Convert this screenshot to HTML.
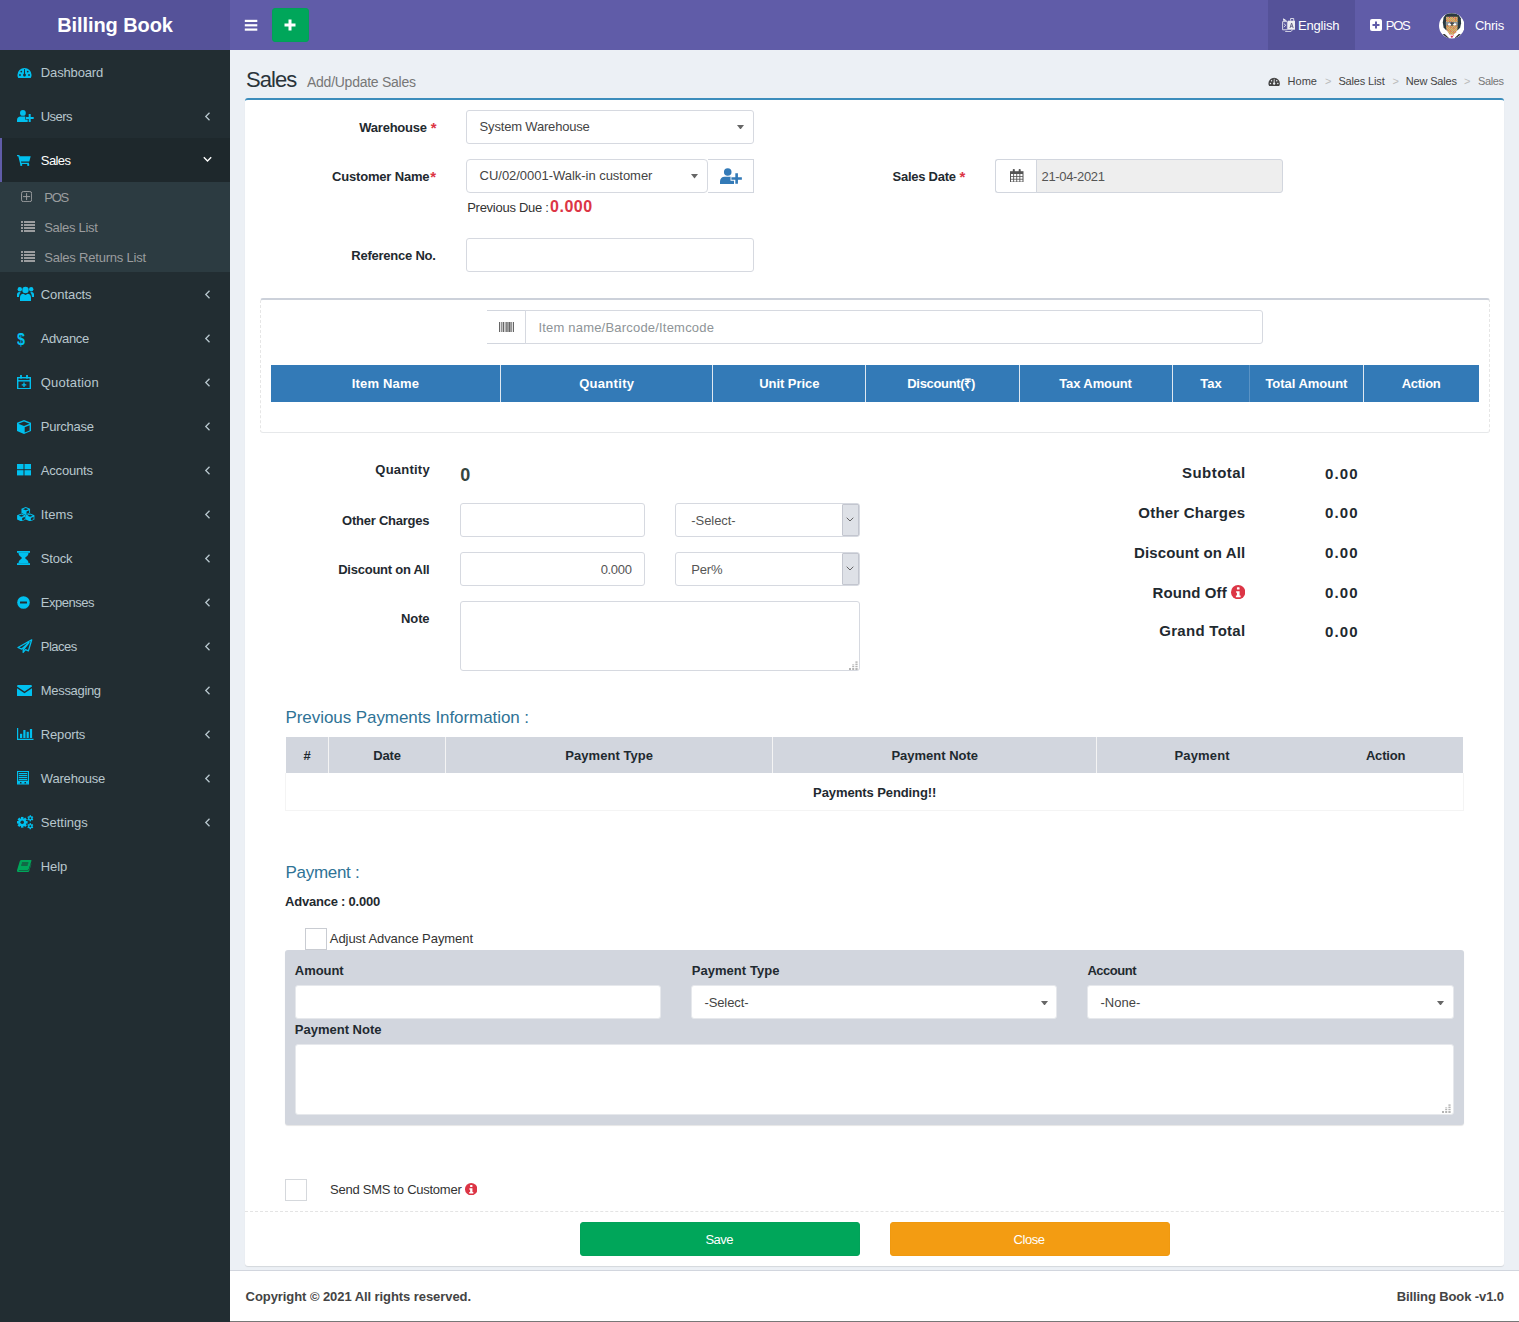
<!DOCTYPE html>
<html lang="en">
<head>
<meta charset="utf-8">
<title>Billing Book - Sales</title>
<style>
*{box-sizing:border-box;margin:0;padding:0}
html,body{width:1519px;height:1322px;overflow:hidden}
body{font-family:"Liberation Sans",sans-serif;font-size:13px;color:#333;background:#ecf0f5;position:relative;line-height:20px}
.abs{position:absolute}
.t{position:absolute;white-space:nowrap;line-height:20px}
.inp{position:absolute;background:#fff;border:1px solid #d6d9e0;border-radius:3px}
.lab{color:#222;font-weight:bold}

</style>
</head>
<body>
<div class="abs" style="left:0px;top:0px;width:230px;height:50px;background:#555299"></div>
<span class="t" style="left:57.2px;top:15px;font-size:20px;font-weight:bold;color:#fff;letter-spacing:-0.08px;">Billing Book</span>
<div class="abs" style="left:230px;top:0px;width:1289px;height:50px;background:#605ca8"></div>
<svg class="abs" style="left:244px;top:19px;" width="15" height="13" viewBox="0 0 15 13"><g fill="#fff"><rect x=".8" y=".8" width="12.500" height="2.200"/><rect x=".8" y="5.200" width="12.500" height="2.200"/><rect x=".8" y="9.500" width="12.500" height="2.200"/></g></svg>
<div class="abs" style="left:272px;top:8px;width:37px;height:34px;background:#00a65a;border-radius:3px;border:1px solid #02a058"></div>
<svg class="abs" style="left:284px;top:19px;" width="12" height="12" viewBox="0 0 12 12"><path d="M4.5 0.5h3v4h4v3h-4v4h-3v-4h-4v-3h4z" fill="#fff"/></svg>
<div class="abs" style="left:1268px;top:0px;width:87px;height:50px;background:#555299"></div>
<span class="t" style="left:1298px;top:16px;color:#fff;letter-spacing:-0.19px;">English</span>
<span class="t" style="left:1385.7px;top:16px;color:#fff;letter-spacing:-1.20px;">POS</span>
<span class="t" style="left:1475px;top:16px;color:#fff;letter-spacing:-0.29px;">Chris</span>
<svg class="abs" style="left:1370px;top:19px;" width="12" height="12" viewBox="0 0 12 12"><rect width="12" height="12" rx="2" fill="#fff"/><path d="M5 2.5h2v2.5h2.5v2h-2.5v2.5h-2v-2.5h-2.5v-2h2.5z" fill="#605ca8"/></svg>
<svg class="abs" style="left:1281.8px;top:17.8px;" width="13.2" height="14.4" viewBox="0 0 13.200 14.400"><g stroke="#e4e4ee" fill="none" stroke-width=".9"><path d="M.6 3.600h4.800v8.200h-4.800z"/><path d="M1.800 5.600l2 1.700l-2 1.800"/><path d="M8.600 2.600v-2.100h3.100v2.300"/><path d="M3.200 13.600h5.800l1.600-2"/></g><path d="M1.200 .3l3.800 2.500h-3.800z" fill="#fff"/><rect x="6" y="2.700" width="7" height="9" fill="#eeeef3"/><path d="M8 10l1.600-5l1.600 5M8.600 8.300h2" stroke="#5c5c80" stroke-width=".9" fill="none"/></svg>
<svg class="abs" style="left:1438.8px;top:13px;" width="25.5" height="25.5" viewBox="0 0 25.500 25.500"><defs><pattern id="avp" width="2" height="2" patternUnits="userSpaceOnUse"><rect width="2" height="2" fill="#a9aeb4"/><circle cx=".6" cy=".6" r=".62" fill="#f5a21b"/><circle cx="1.600" cy="1.600" r=".62" fill="#f5a21b"/></pattern><clipPath id="avc"><circle cx="12.750" cy="12.750" r="12.750"/></clipPath></defs><circle cx="12.750" cy="12.750" r="12.750" fill="#fff"/><g clip-path="url(#avc)"><path d="M9.500 .3h6.500l3.500 1.500l2.300 3.500l.3 5l-1 4.500l-2.500 2.500h-11.500l-2.500-2.800l-.8-5l.8-5l2-3z" fill="#2a3a40"/><path d="M7 3.800h11.700v5.300h-11.700z" fill="url(#avp)"/><g fill="#e23a4e"><circle cx="10.500" cy="4.500" r=".55"/><circle cx="14.500" cy="4.500" r=".55"/><circle cx="7.800" cy="7.200" r=".55"/><circle cx="10.800" cy="8.200" r=".55"/><circle cx="12.800" cy="9" r=".55"/><circle cx="16.800" cy="7" r=".55"/><circle cx="16.500" cy="5.200" r=".55"/></g><path d="M6.800 9h12v3.300h-12z" fill="#8a9397"/><path d="M7 12.200h11.700l-.3 4.500l-2.400 3.800l-2.200 1.300h-1.800l-2.200-1.300l-2.400-3.800z" fill="url(#avp)"/><g fill="#e23a4e"><circle cx="8.800" cy="13" r=".55"/><circle cx="16.800" cy="13" r=".55"/><circle cx="11.800" cy="14" r=".55"/><circle cx="14.800" cy="15" r=".55"/><circle cx="8.800" cy="17" r=".55"/><circle cx="11.800" cy="18" r=".55"/><circle cx="14.800" cy="19" r=".55"/><circle cx="16.800" cy="19" r=".55"/><circle cx="10.800" cy="21" r=".55"/><circle cx="14.600" cy="22" r=".55"/></g><ellipse cx="10.500" cy="11.400" rx="1.600" ry="1.100" fill="#fff"/><ellipse cx="15.700" cy="11.400" rx="1.600" ry="1.100" fill="#fff"/><path d="M13 9v4" stroke="#222" stroke-width=".8"/><circle cx="12" cy="10.200" r=".6" fill="#111"/><circle cx="14.200" cy="10.200" r=".6" fill="#111"/><path d="M3.500 21.300l2.200-.3l4 3.800l-1 .7z" fill="#333"/><path d="M22 21.300l-2.200-.3l-4 3.800l1 .7z" fill="#333"/><path d="M11.300 22.800h3.200l-1.600 2.500z" fill="#e0314a"/></g></svg>
<div class="abs" style="left:0px;top:50px;width:230px;height:1272px;background:#222d32"></div>
<div class="abs" style="left:0px;top:138px;width:230px;height:44px;background:#1e282c;border-left:2px solid #605ca8"></div>
<div class="abs" style="left:0px;top:182px;width:230px;height:90px;background:#2c3b41"></div>
<span class="t" style="left:40.8px;top:63px;color:#b8c7ce;letter-spacing:-0.14px;">Dashboard</span>
<span class="t" style="left:40.8px;top:107px;color:#b8c7ce;letter-spacing:-0.59px;">Users</span>
<svg class="abs" style="left:204px;top:112px;" width="7" height="9" viewBox="0 0 7 9"><path d="M5.5 0.8L1.8 4.5L5.5 8.2" fill="none" stroke="#b8c7ce" stroke-width="1.3"/></svg>
<span class="t" style="left:40.8px;top:151px;color:#fff;letter-spacing:-0.58px;">Sales</span>
<span class="t" style="left:40.8px;top:285px;color:#b8c7ce;letter-spacing:-0.07px;">Contacts</span>
<svg class="abs" style="left:204px;top:290px;" width="7" height="9" viewBox="0 0 7 9"><path d="M5.5 0.8L1.8 4.5L5.5 8.2" fill="none" stroke="#b8c7ce" stroke-width="1.3"/></svg>
<span class="t" style="left:40.8px;top:329px;color:#b8c7ce;letter-spacing:-0.37px;">Advance</span>
<svg class="abs" style="left:204px;top:334px;" width="7" height="9" viewBox="0 0 7 9"><path d="M5.5 0.8L1.8 4.5L5.5 8.2" fill="none" stroke="#b8c7ce" stroke-width="1.3"/></svg>
<span class="t" style="left:40.8px;top:373px;color:#b8c7ce;letter-spacing:0.19px;">Quotation</span>
<svg class="abs" style="left:204px;top:378px;" width="7" height="9" viewBox="0 0 7 9"><path d="M5.5 0.8L1.8 4.5L5.5 8.2" fill="none" stroke="#b8c7ce" stroke-width="1.3"/></svg>
<span class="t" style="left:40.8px;top:417px;color:#b8c7ce;letter-spacing:-0.26px;">Purchase</span>
<svg class="abs" style="left:204px;top:422px;" width="7" height="9" viewBox="0 0 7 9"><path d="M5.5 0.8L1.8 4.5L5.5 8.2" fill="none" stroke="#b8c7ce" stroke-width="1.3"/></svg>
<span class="t" style="left:40.8px;top:461px;color:#b8c7ce;letter-spacing:-0.18px;">Accounts</span>
<svg class="abs" style="left:204px;top:466px;" width="7" height="9" viewBox="0 0 7 9"><path d="M5.5 0.8L1.8 4.5L5.5 8.2" fill="none" stroke="#b8c7ce" stroke-width="1.3"/></svg>
<span class="t" style="left:40.8px;top:505px;color:#b8c7ce;letter-spacing:0.10px;">Items</span>
<svg class="abs" style="left:204px;top:510px;" width="7" height="9" viewBox="0 0 7 9"><path d="M5.5 0.8L1.8 4.5L5.5 8.2" fill="none" stroke="#b8c7ce" stroke-width="1.3"/></svg>
<span class="t" style="left:40.8px;top:549px;color:#b8c7ce;letter-spacing:-0.20px;">Stock</span>
<svg class="abs" style="left:204px;top:554px;" width="7" height="9" viewBox="0 0 7 9"><path d="M5.5 0.8L1.8 4.5L5.5 8.2" fill="none" stroke="#b8c7ce" stroke-width="1.3"/></svg>
<span class="t" style="left:40.8px;top:593px;color:#b8c7ce;letter-spacing:-0.50px;">Expenses</span>
<svg class="abs" style="left:204px;top:598px;" width="7" height="9" viewBox="0 0 7 9"><path d="M5.5 0.8L1.8 4.5L5.5 8.2" fill="none" stroke="#b8c7ce" stroke-width="1.3"/></svg>
<span class="t" style="left:40.8px;top:637px;color:#b8c7ce;letter-spacing:-0.51px;">Places</span>
<svg class="abs" style="left:204px;top:642px;" width="7" height="9" viewBox="0 0 7 9"><path d="M5.5 0.8L1.8 4.5L5.5 8.2" fill="none" stroke="#b8c7ce" stroke-width="1.3"/></svg>
<span class="t" style="left:40.8px;top:681px;color:#b8c7ce;letter-spacing:-0.32px;">Messaging</span>
<svg class="abs" style="left:204px;top:686px;" width="7" height="9" viewBox="0 0 7 9"><path d="M5.5 0.8L1.8 4.5L5.5 8.2" fill="none" stroke="#b8c7ce" stroke-width="1.3"/></svg>
<span class="t" style="left:40.8px;top:725px;color:#b8c7ce;letter-spacing:-0.16px;">Reports</span>
<svg class="abs" style="left:204px;top:730px;" width="7" height="9" viewBox="0 0 7 9"><path d="M5.5 0.8L1.8 4.5L5.5 8.2" fill="none" stroke="#b8c7ce" stroke-width="1.3"/></svg>
<span class="t" style="left:40.8px;top:769px;color:#b8c7ce;letter-spacing:-0.18px;">Warehouse</span>
<svg class="abs" style="left:204px;top:774px;" width="7" height="9" viewBox="0 0 7 9"><path d="M5.5 0.8L1.8 4.5L5.5 8.2" fill="none" stroke="#b8c7ce" stroke-width="1.3"/></svg>
<span class="t" style="left:40.8px;top:813px;color:#b8c7ce;">Settings</span>
<svg class="abs" style="left:204px;top:818px;" width="7" height="9" viewBox="0 0 7 9"><path d="M5.5 0.8L1.8 4.5L5.5 8.2" fill="none" stroke="#b8c7ce" stroke-width="1.3"/></svg>
<span class="t" style="left:40.8px;top:857px;color:#b8c7ce;letter-spacing:-0.12px;">Help</span>
<svg class="abs" style="left:203px;top:156px;" width="9" height="7" viewBox="0 0 9 7"><path d="M0.8 1.2L4.5 4.9L8.2 1.2" fill="none" stroke="#fff" stroke-width="1.4"/></svg>
<span class="t" style="left:44.2px;top:188px;color:#9b9d9f;letter-spacing:-1.20px;">POS</span>
<span class="t" style="left:44.2px;top:218px;color:#9b9d9f;letter-spacing:-0.29px;">Sales List</span>
<span class="t" style="left:44.2px;top:248px;color:#9b9d9f;letter-spacing:-0.21px;">Sales Returns List</span>
<svg class="abs" style="left:20.9px;top:190.9px;" width="11.2" height="11.2" viewBox="0 0 11.200 11.200"><rect x=".55" y=".55" width="10.100" height="10.100" rx="1.800" fill="none" stroke="#9b9d9f"/><path d="M5.600 2.100v7M2.100 5.600h7" stroke="#9b9d9f" stroke-width="1" fill="none"/></svg>
<svg class="abs" style="left:21px;top:221px;" width="14" height="11" viewBox="0 0 14 11"><g fill="#9b9d9f"><rect x="0" y="0" width="2" height="2"/><rect x="3" y="0" width="11" height="2"/><rect x="0" y="3" width="2" height="2"/><rect x="3" y="3" width="11" height="2"/><rect x="0" y="6" width="2" height="2"/><rect x="3" y="6" width="11" height="2"/><rect x="0" y="9" width="2" height="2"/><rect x="3" y="9" width="11" height="2"/></g></svg>
<svg class="abs" style="left:21px;top:251px;" width="14" height="11" viewBox="0 0 14 11"><g fill="#9b9d9f"><rect x="0" y="0" width="2" height="2"/><rect x="3" y="0" width="11" height="2"/><rect x="0" y="3" width="2" height="2"/><rect x="3" y="3" width="11" height="2"/><rect x="0" y="6" width="2" height="2"/><rect x="3" y="6" width="11" height="2"/><rect x="0" y="9" width="2" height="2"/><rect x="3" y="9" width="11" height="2"/></g></svg>
<svg class="abs" style="left:17.1px;top:66.8px;" width="15" height="11.3" viewBox="0 0 15 12"><g fill="#00c0ef"><path d="M0 8.500a7.500 7.500 0 0 1 15 0c0 1-.3 2.200-.8 3a1 1 0 0 1-.8.500h-11.800a1 1 0 0 1-.8-.500c-.5-.8-.8-2-.8-3z"/><g fill="#222d32"><circle cx="2.700" cy="8.500" r=".95"/><circle cx="4.100" cy="4.900" r=".95"/><circle cx="10.900" cy="4.900" r=".95"/><circle cx="12.300" cy="8.500" r=".95"/><path d="M7.100 2.200h.8l.25 5a1.500 1.500 0 1 1-1.300 0z"/></g></g></svg>
<svg class="abs" style="left:17.1px;top:109.7px;" width="16.8" height="12.4" viewBox="0 0 16.8 12.4"><g fill="#00c0ef"><circle cx="5.900" cy="2.900" r="2.900"/><path d="M0 12.400v-2.300c0-2.200 1.500-3.500 3.500-3.500h4.800c1.200 0 2 .5 2.400 1.200v4.600z"/><path d="M11.700 3.900h2v3h3v2h-3v3h-2v-3h-3v-2h3z" stroke="#222d32" stroke-width="1.300" paint-order="stroke"/></g></svg>
<svg class="abs" style="left:17.3px;top:154.8px;" width="13.8" height="11" viewBox="0 0 13.8 11"><g fill="#00c0ef"><path d="M0 0h2.300l.5 1.200h10.900l-1.400 5.400h-8.300l.3 1.200h7.600v1.200h-8.700l-1.900-7.800h-1.300z"/><circle cx="4.200" cy="9.900" r="1.100"/><circle cx="11.200" cy="9.900" r="1.100"/></g></svg>
<svg class="abs" style="left:16.5px;top:286px;" width="17" height="15" viewBox="0 0 17 15"><g fill="#00c0ef"><circle cx="8.500" cy="4" r="3.200"/><path d="M3 15v-3.500c0-2.300 1.500-3.700 3.300-3.700l2.200 1.200l2.200-1.200c1.800 0 3.300 1.400 3.300 3.700v3.500z"/><circle cx="2.800" cy="3.200" r="2.200"/><circle cx="14.200" cy="3.200" r="2.200"/><path d="M0 11v-2.500c0-1.500 1-2.500 2.300-2.500l1.500.5c-1 .8-1.500 2-1.800 4.500z"/><path d="M17 11v-2.500c0-1.500-1-2.500-2.300-2.500l-1.500.5c1 .8 1.500 2 1.800 4.500z"/></g></svg>
<span class="t" style="left:17.3px;top:330px;font-size:17px;font-weight:bold;color:#00c0ef;transform:scaleX(.84);transform-origin:0 0;">$</span>
<svg class="abs" style="left:17px;top:374.5px;" width="14" height="14.5" viewBox="0 0 14 14.5"><g fill="none" stroke="#00c0ef"><rect x=".7" y="2.700" width="12.600" height="11" stroke-width="1.400"/><path d="M1 5.800h12" stroke-width="1.400"/><path d="M4 0v3.500M10 0v3.500" stroke-width="1.800"/><path d="M7 7.500v4.500M4.700 9.800h4.600" stroke-width="1.300"/></g></svg>
<svg class="abs" style="left:17px;top:419.5px;" width="14" height="14" viewBox="0 0 14 14"><g fill="#00c0ef"><path d="M7 0l7 2.800v8.200l-7 3l-7-3v-8.200z"/><path d="M1.300 3.700l5.700 2.300l5.700-2.300l-5.700-2.300z" fill="#222d32"/><path d="M7.700 7.200v5.300l4.900-2.100v-5.200z" fill="#222d32"/></g></svg>
<svg class="abs" style="left:17px;top:464px;" width="14" height="11.5" viewBox="0 0 14 11.5"><g fill="#00c0ef"><rect x="0" y="0" width="6.500" height="5.200"/><rect x="7.500" y="0" width="6.500" height="5.200"/><rect x="0" y="6.200" width="6.500" height="5.200"/><rect x="7.500" y="6.200" width="6.500" height="5.200"/></g></svg>
<svg class="abs" style="left:17px;top:506.5px;" width="17.5" height="14.5" viewBox="0 0 17.5 14.5"><g fill="#00c0ef"><path d="M8.75 0l4.3 1.72v4.3l-4.3 1.935l-4.3-1.935v-4.3z"/><path d="M8.75 1.075l2.666 1.075l-2.666 1.075l-2.666-1.075z" fill="#222d32"/><path d="M9.524 4.515v2.365l2.666-1.204v-2.365z" fill="#222d32"/><path d="M4.4 6.5l4.3 1.72v4.3l-4.3 1.935l-4.3-1.935v-4.3z"/><path d="M4.4 7.575l2.666 1.075l-2.666 1.075l-2.666-1.075z" fill="#222d32"/><path d="M5.174 11.015v2.365l2.666-1.204v-2.365z" fill="#222d32"/><path d="M13.1 6.5l4.3 1.72v4.3l-4.3 1.935l-4.3-1.935v-4.3z"/><path d="M13.1 7.575l2.666 1.075l-2.666 1.075l-2.666-1.075z" fill="#222d32"/><path d="M13.873999999999999 11.015v2.365l2.666-1.204v-2.365z" fill="#222d32"/></g></svg>
<svg class="abs" style="left:17px;top:550.5px;" width="13" height="14" viewBox="0 0 13 14"><g fill="#00c0ef"><rect x="0" y="0" width="13" height="1.800"/><rect x="0" y="12.200" width="13" height="1.800"/><path d="M1.500 1.800h10c0 3-2.500 4-3.500 5.200c1 1.200 3.500 2.200 3.500 5.200h-10c0-3 2.500-4 3.500-5.200c-1-1.200-3.500-2.200-3.500-5.200z"/></g></svg>
<svg class="abs" style="left:17px;top:595.8px;" width="13" height="13" viewBox="0 0 13 13"><g fill="#00c0ef"><circle cx="6.500" cy="6.500" r="6.300"/><rect x="3" y="5.400" width="7" height="2.200" rx=".4" fill="#222d32"/></g></svg>
<svg class="abs" style="left:17px;top:639px;" width="15.5" height="14" viewBox="0 0 15.500 14"><path d="M14.700 .8l-13.700 7.700l3.800 1.600l7.200-6.600l-5.800 7.400v2.500l2.300-2.700l2.900 1.200z" fill="none" stroke="#00c0ef" stroke-width="1.300" stroke-linejoin="round"/></svg>
<svg class="abs" style="left:17px;top:684.8px;" width="15" height="11.5" viewBox="0 0 15 11.5"><g fill="#00c0ef"><path d="M0 1.200a1.200 1.200 0 0 1 1.200-1.200h12.600a1.200 1.200 0 0 1 1.200 1.200v.4l-7.500 5l-7.500-5z"/><path d="M0 3.200l7.500 5l7.500-5v7.100a1.200 1.200 0 0 1-1.200 1.200h-12.600a1.200 1.200 0 0 1-1.200-1.200z"/></g></svg>
<svg class="abs" style="left:17px;top:728px;" width="16.5" height="12" viewBox="0 0 16.5 12"><g fill="#00c0ef"><path d="M0 0h1.200v10.800h15.300v1.200h-16.500z"/><rect x="3" y="5.800" width="2.200" height="4.200"/><rect x="6.300" y="2" width="2.200" height="8"/><rect x="9.600" y="3.800" width="2.200" height="6.200"/><rect x="12.900" y="1" width="2.200" height="9"/></g></svg>
<svg class="abs" style="left:17px;top:771px;" width="12" height="13.5" viewBox="0 0 12 13.5"><g fill="#00c0ef"><path d="M0 0h12v13.500h-12zM1.100 1.100v11.300h9.800v-11.300z" fill-rule="evenodd"/><rect x="1.800" y="2" width="8.400" height="1.150"/><rect x="1.800" y="4" width="8.400" height="1.150"/><rect x="1.800" y="6" width="8.400" height="1.150"/><rect x="1.800" y="8" width="8.400" height="1.150"/><path d="M1 9.800h10v3h-2v-1.700h-1.500v1.700h-3v-1.700h-1.500v1.700h-2z"/></g></svg>
<svg class="abs" style="left:17px;top:815px;" width="16.5" height="14.5" viewBox="0 0 16.5 14.5"><g fill="#00c0ef"><circle cx="5.2" cy="7.3" r="3.9"/><rect x="3.95" y="1.92" width="2.50" height="2.34" transform="rotate(0 5.2 7.3)"/><rect x="3.95" y="1.92" width="2.50" height="2.34" transform="rotate(45 5.2 7.3)"/><rect x="3.95" y="1.92" width="2.50" height="2.34" transform="rotate(90 5.2 7.3)"/><rect x="3.95" y="1.92" width="2.50" height="2.34" transform="rotate(135 5.2 7.3)"/><rect x="3.95" y="1.92" width="2.50" height="2.34" transform="rotate(180 5.2 7.3)"/><rect x="3.95" y="1.92" width="2.50" height="2.34" transform="rotate(225 5.2 7.3)"/><rect x="3.95" y="1.92" width="2.50" height="2.34" transform="rotate(270 5.2 7.3)"/><rect x="3.95" y="1.92" width="2.50" height="2.34" transform="rotate(315 5.2 7.3)"/><circle cx="5.2" cy="7.3" r="1.8" fill="#222d32"/><circle cx="13.3" cy="3.3" r="2.2"/><rect x="12.60" y="0.26" width="1.41" height="1.32" transform="rotate(0 13.3 3.3)"/><rect x="12.60" y="0.26" width="1.41" height="1.32" transform="rotate(60 13.3 3.3)"/><rect x="12.60" y="0.26" width="1.41" height="1.32" transform="rotate(120 13.3 3.3)"/><rect x="12.60" y="0.26" width="1.41" height="1.32" transform="rotate(180 13.3 3.3)"/><rect x="12.60" y="0.26" width="1.41" height="1.32" transform="rotate(240 13.3 3.3)"/><rect x="12.60" y="0.26" width="1.41" height="1.32" transform="rotate(300 13.3 3.3)"/><circle cx="13.3" cy="3.3" r="1.0" fill="#222d32"/><circle cx="13.3" cy="11.2" r="2.2"/><rect x="12.60" y="8.16" width="1.41" height="1.32" transform="rotate(0 13.3 11.2)"/><rect x="12.60" y="8.16" width="1.41" height="1.32" transform="rotate(60 13.3 11.2)"/><rect x="12.60" y="8.16" width="1.41" height="1.32" transform="rotate(120 13.3 11.2)"/><rect x="12.60" y="8.16" width="1.41" height="1.32" transform="rotate(180 13.3 11.2)"/><rect x="12.60" y="8.16" width="1.41" height="1.32" transform="rotate(240 13.3 11.2)"/><rect x="12.60" y="8.16" width="1.41" height="1.32" transform="rotate(300 13.3 11.2)"/><circle cx="13.3" cy="11.2" r="1.0" fill="#222d32"/></g></svg>
<svg class="abs" style="left:17px;top:860px;" width="14.5" height="12" viewBox="0 0 14.5 12"><g fill="#00a65a"><path d="M4.300 0h9.700c.5 0 .6.400.4.900l-2.600 8c-.2.600-.7 1-1.300 1h-8.300c-.5 0-.6.600 0 .600h8.800c.5 0 1-.4 1.200-1l2-6.200v1.200l-2 6.500c-.2.600-.8 1-1.400 1h-9.300c-1.200 0-1.800-.8-1.400-2l2.400-8c.3-1.200.9-2 1.800-2z"/><g fill="#222d32"><path d="M5 2.500h6.500l-.3.900h-6.500z"/><path d="M4.400 4.500h6.500l-.3.900h-6.500z"/></g></g></svg>
<span class="t" style="left:246px;top:70px;font-size:22px;color:#2a343a;letter-spacing:-0.93px;">Sales</span>
<span class="t" style="left:307px;top:72px;font-size:14px;color:#777;letter-spacing:-0.26px;">Add/Update Sales</span>
<svg class="abs" style="left:1267.7px;top:76.7px;" width="12.3" height="9.2" viewBox="0 0 15 12"><g fill="#444"><path d="M0 8.500a7.500 7.500 0 0 1 15 0c0 1-.3 2.200-.8 3a1 1 0 0 1-.8.500h-11.800a1 1 0 0 1-.8-.500c-.5-.8-.8-2-.8-3z"/><g fill="#ecf0f5"><circle cx="2.700" cy="8.500" r=".95"/><circle cx="4.100" cy="4.900" r=".95"/><circle cx="10.900" cy="4.900" r=".95"/><circle cx="12.300" cy="8.500" r=".95"/><path d="M7.100 2.200h.8l.25 5a1.500 1.500 0 1 1-1.300 0z"/></g></g></svg>
<span class="t" style="left:1287.6px;top:71px;font-size:11px;color:#444;">Home</span>
<span class="t" style="left:1338.4px;top:71px;font-size:11px;color:#444;letter-spacing:-0.15px;">Sales List</span>
<span class="t" style="left:1405.8px;top:71px;font-size:11px;color:#444;letter-spacing:-0.17px;">New Sales</span>
<span class="t" style="left:1478px;top:71px;font-size:11px;color:#777;letter-spacing:-0.38px;">Sales</span>
<span class="t" style="left:1325px;top:71px;font-size:11px;color:#bbb;">&gt;</span>
<span class="t" style="left:1392.6px;top:71px;font-size:11px;color:#bbb;">&gt;</span>
<span class="t" style="left:1464px;top:71px;font-size:11px;color:#bbb;">&gt;</span>
<div class="abs" style="left:245px;top:97.5px;width:1259px;height:1168.5px;background:#fff;border-top:2px solid #3c8dbc;border-radius:3px;box-shadow:0 1px 1px rgba(0,0,0,.1)"></div>
<span class="t" style="left:359.3px;top:118px;font-weight:bold;color:#1f2a30;letter-spacing:-0.24px;">Warehouse</span>
<span class="t" style="left:430.7px;top:118px;font-size:15px;font-weight:bold;color:#dc3545;">*</span>
<div class="inp" style="left:466px;top:110px;width:288px;height:34px;"></div>
<span class="t" style="left:479.6px;top:117px;color:#444;letter-spacing:-0.18px;">System Warehouse</span>
<svg class="abs" style="left:737px;top:124.8px;" width="7" height="4.5" viewBox="0 0 7 4.500"><path d="M0 0h7l-3.500 4.500z" fill="#666"/></svg>
<span class="t" style="left:332px;top:167px;font-weight:bold;color:#1f2a30;letter-spacing:-0.18px;">Customer Name</span>
<span class="t" style="left:430.2px;top:167px;font-size:15px;font-weight:bold;color:#dc3545;">*</span>
<div class="inp" style="left:466px;top:159px;width:242px;height:34px;border-radius:4px"></div>
<span class="t" style="left:479.6px;top:166px;color:#444;letter-spacing:-0.03px;">CU/02/0001-Walk-in customer</span>
<svg class="abs" style="left:691px;top:174px;" width="7" height="4.5" viewBox="0 0 7 4.500"><path d="M0 0h7l-3.500 4.500z" fill="#666"/></svg>
<div class="abs" style="left:708px;top:159px;width:46px;height:34px;background:#fff;border:1px solid #d2d6de;border-left:0"></div>
<svg class="abs" style="left:719.6px;top:167.8px;" width="22" height="16.6" viewBox="0 0 16.800 12.400"><g fill="#337ab7"><circle cx="5.900" cy="2.900" r="2.900"/><path d="M0 12.400v-2.300c0-2.200 1.500-3.500 3.500-3.500h4.800c1.200 0 2 .5 2.400 1.200v4.600z"/><path d="M11.700 3.900h2v3h3v2h-3v3h-2v-3h-3v-2h3z" stroke="#fff" stroke-width="1.300" paint-order="stroke"/></g></svg>
<span class="t" style="left:467.2px;top:198px;color:#333;letter-spacing:-0.27px;">Previous Due :</span>
<span class="t" style="left:550.1px;top:197px;font-size:16px;font-weight:bold;color:#dc3545;letter-spacing:0.51px;">0.000</span>
<span class="t" style="left:892.5px;top:167px;font-weight:bold;color:#1f2a30;letter-spacing:-0.25px;">Sales Date</span>
<span class="t" style="left:959.5px;top:167px;font-size:15px;font-weight:bold;color:#dc3545;">*</span>
<div class="abs" style="left:995px;top:159px;width:42px;height:34px;background:#fff;border:1px solid #d2d6de;border-right:0;border-radius:3px 0 0 3px"></div>
<div class="abs" style="left:1036px;top:159px;width:247px;height:34px;background:#eee;border:1px solid #d2d6de;border-radius:0 3px 3px 0"></div>
<span class="t" style="left:1041.5px;top:167px;color:#555;letter-spacing:-0.34px;">21-04-2021</span>
<svg class="abs" style="left:1010px;top:168.5px;" width="13.5" height="13.5" viewBox="0 0 13.500 13.500"><g fill="#555"><path d="M0 2.200h13.500v11.300h-13.500z"/><rect x="2.800" y="0" width="2" height="3.600" rx=".8"/><rect x="8.700" y="0" width="2" height="3.600" rx=".8"/></g><g fill="#fff"><rect x="1" y="5" width="2.200" height="2"/><rect x="4.100" y="5" width="2.200" height="2"/><rect x="7.200" y="5" width="2.200" height="2"/><rect x="10.300" y="5" width="2.200" height="2"/><rect x="1" y="7.800" width="2.200" height="2"/><rect x="4.100" y="7.800" width="2.200" height="2"/><rect x="7.200" y="7.800" width="2.200" height="2"/><rect x="10.300" y="7.800" width="2.200" height="2"/><rect x="1" y="10.600" width="2.200" height="2"/><rect x="4.100" y="10.600" width="2.200" height="2"/><rect x="7.200" y="10.600" width="2.200" height="2"/><rect x="10.300" y="10.600" width="2.200" height="2"/></g></svg>
<span class="t" style="left:351.3px;top:246px;font-weight:bold;color:#1f2a30;letter-spacing:-0.24px;">Reference No.</span>
<div class="inp" style="left:466px;top:238px;width:288px;height:34px;"></div>
<div class="abs" style="left:259.5px;top:298px;width:1230px;height:134.5px;background:#fff;border-top:2px solid #ccd1da;border-radius:3px;border-left:1px dashed #e6e6e6;border-right:1px dashed #e6e6e6;border-bottom:1px solid #e6e8ea"></div>
<div class="abs" style="left:487px;top:310px;width:39px;height:34px;background:#fff;border-top:1px solid #d2d6de;border-bottom:1px solid #d2d6de"></div>
<div class="inp" style="left:525px;top:310px;width:738px;height:34px;border-radius:0 3px 3px 0"></div>
<svg class="abs" style="left:498.5px;top:321.5px;" width="15.5" height="10.5" viewBox="0 0 15.500 10.500"><g fill="#666"><rect x="0" y="0" width="1.200" height="10.500"/><rect x="2" y="0" width=".7" height="10.500"/><rect x="3.600" y="0" width="1.500" height="10.500"/><rect x="5.800" y="0" width=".7" height="10.500"/><rect x="7.200" y="0" width="1.500" height="10.500"/><rect x="9.400" y="0" width="2.200" height="10.500"/><rect x="12.300" y="0" width=".7" height="10.500"/><rect x="13.800" y="0" width="1.700" height="10.500"/></g></svg>
<span class="t" style="left:538.4px;top:318px;color:#8e9497;letter-spacing:0.20px;">Item name/Barcode/Itemcode</span>
<div class="abs" style="left:271px;top:365px;width:1208px;height:37px;background:#337ab7"></div>
<div class="abs" style="left:500px;top:365px;width:1px;height:37px;background:#dfe8f1"></div>
<div class="abs" style="left:712px;top:365px;width:1px;height:37px;background:#dfe8f1"></div>
<div class="abs" style="left:865px;top:365px;width:1px;height:37px;background:#dfe8f1"></div>
<div class="abs" style="left:1019px;top:365px;width:1px;height:37px;background:#dfe8f1"></div>
<div class="abs" style="left:1172px;top:365px;width:1px;height:37px;background:#dfe8f1"></div>
<div class="abs" style="left:1363px;top:365px;width:1px;height:37px;background:#dfe8f1"></div>
<div class="abs" style="left:1249px;top:365px;width:1px;height:37px;background:#5a93c5"></div>
<span class="t" style="left:351.7px;top:374px;font-weight:bold;color:#fff;letter-spacing:0.20px;">Item Name</span>
<span class="t" style="left:579.2px;top:374px;font-weight:bold;color:#fff;letter-spacing:0.30px;">Quantity</span>
<span class="t" style="left:759.2px;top:374px;font-weight:bold;color:#fff;letter-spacing:-0.05px;">Unit Price</span>
<span class="t" style="left:907.3px;top:374px;font-weight:bold;color:#fff;letter-spacing:-0.33px;">Discount(₹)</span>
<span class="t" style="left:1059.2px;top:374px;font-weight:bold;color:#fff;letter-spacing:-0.10px;">Tax Amount</span>
<span class="t" style="left:1200.2px;top:374px;font-weight:bold;color:#fff;">Tax</span>
<span class="t" style="left:1265.4px;top:374px;font-weight:bold;color:#fff;letter-spacing:-0.03px;">Total Amount</span>
<span class="t" style="left:1401.7px;top:374px;font-weight:bold;color:#fff;letter-spacing:-0.27px;">Action</span>
<span class="t" style="left:375.3px;top:460px;font-weight:bold;color:#1f2a30;letter-spacing:0.23px;">Quantity</span>
<span class="t" style="left:460.2px;top:465px;font-size:18px;font-weight:bold;color:#35463f;">0</span>
<span class="t" style="left:342px;top:511px;font-weight:bold;color:#1f2a30;letter-spacing:-0.23px;">Other Charges</span>
<div class="inp" style="left:460px;top:503px;width:185px;height:34px;"></div>
<span class="t" style="left:338.2px;top:560px;font-weight:bold;color:#1f2a30;letter-spacing:-0.24px;">Discount on All</span>
<div class="inp" style="left:460px;top:552px;width:185px;height:34px;"></div>
<span class="t" style="left:600.7px;top:560px;color:#555;letter-spacing:-0.34px;">0.000</span>
<span class="t" style="left:401px;top:609px;font-weight:bold;color:#1f2a30;letter-spacing:-0.10px;">Note</span>
<div class="inp" style="left:460px;top:601px;width:400px;height:70px;"></div>
<div class="inp" style="left:675px;top:503px;width:184.5px;height:34px;"></div>
<div class="abs" style="left:842px;top:504px;width:16.5px;height:32px;background:#dee1e7;border:1px solid #c3c6cf;border-radius:1px"></div>
<svg class="abs" style="left:846px;top:517px;" width="8" height="5" viewBox="0 0 8 5"><path d="M.7 .7L4 4L7.300 .7" fill="none" stroke="#555" stroke-width=".9"/></svg>
<span class="t" style="left:691.3px;top:511px;color:#555;letter-spacing:-0.07px;">-Select-</span>
<div class="inp" style="left:675px;top:552px;width:184.5px;height:34px;"></div>
<div class="abs" style="left:842px;top:553px;width:16.5px;height:32px;background:#dee1e7;border:1px solid #c3c6cf;border-radius:1px"></div>
<svg class="abs" style="left:846px;top:566px;" width="8" height="5" viewBox="0 0 8 5"><path d="M.7 .7L4 4L7.300 .7" fill="none" stroke="#555" stroke-width=".9"/></svg>
<span class="t" style="left:691.3px;top:560px;color:#555;letter-spacing:-0.20px;">Per%</span>
<svg class="abs" style="left:848.5px;top:660.5px;" width="9" height="9" viewBox="0 0 9 9"><g fill="#b4b4b4"><rect x="0" y="7" width="2" height="2"/><rect x="3.200" y="7" width="2" height="2"/><rect x="3.200" y="4.800" width="2" height="1.400"/><rect x="3.200" y="3.400" width="2" height=".8"/><rect x="6.400" y="7" width="2.200" height="2"/><rect x="6.400" y="4.800" width="2.200" height="1.400"/><rect x="6.400" y="2.600" width="2.200" height="1.400"/><rect x="6.400" y=".4" width="2.200" height="1.400"/></g></svg>
<span class="t" style="left:1182px;top:463px;font-size:15px;font-weight:bold;color:#1f2a30;letter-spacing:0.46px;">Subtotal</span>
<span class="t" style="left:1324.9px;top:464px;font-size:15px;font-weight:bold;color:#1f2a30;letter-spacing:1.17px;">0.00</span>
<span class="t" style="left:1138.3px;top:503px;font-size:15px;font-weight:bold;color:#1f2a30;letter-spacing:0.22px;">Other Charges</span>
<span class="t" style="left:1324.9px;top:503px;font-size:15px;font-weight:bold;color:#1f2a30;letter-spacing:1.17px;">0.00</span>
<span class="t" style="left:1134.1px;top:543px;font-size:15px;font-weight:bold;color:#1f2a30;letter-spacing:0.12px;">Discount on All</span>
<span class="t" style="left:1324.9px;top:543px;font-size:15px;font-weight:bold;color:#1f2a30;letter-spacing:1.17px;">0.00</span>
<span class="t" style="left:1152.6px;top:583px;font-size:15px;font-weight:bold;color:#1f2a30;letter-spacing:0.10px;">Round Off</span>
<span class="t" style="left:1324.9px;top:583px;font-size:15px;font-weight:bold;color:#1f2a30;letter-spacing:1.17px;">0.00</span>
<span class="t" style="left:1159.3px;top:621px;font-size:15px;font-weight:bold;color:#1f2a30;letter-spacing:0.28px;">Grand Total</span>
<span class="t" style="left:1324.9px;top:622px;font-size:15px;font-weight:bold;color:#1f2a30;letter-spacing:1.17px;">0.00</span>
<svg class="abs" style="left:1230.7px;top:584.7px;" width="14.3" height="14.3" viewBox="0 0 14 14"><circle cx="7" cy="7" r="7" fill="#dc3545"/><g fill="#fff"><rect x="5.800" y="2.200" width="2.600" height="2.300" rx=".4"/><path d="M5 6h3.400v4.300h1v1.600h-4.600v-1.600h1v-2.700h-.8z"/></g></svg>
<span class="t" style="left:285.5px;top:708px;font-size:17px;color:#2f7396;letter-spacing:-0.07px;">Previous Payments Information :</span>
<div class="abs" style="left:286px;top:737px;width:1177px;height:36px;background:#d2d6de"></div>
<div class="abs" style="left:328px;top:737px;width:1px;height:36px;background:#f4f4f4"></div>
<div class="abs" style="left:445px;top:737px;width:1px;height:36px;background:#f4f4f4"></div>
<div class="abs" style="left:772px;top:737px;width:1px;height:36px;background:#f4f4f4"></div>
<div class="abs" style="left:1096px;top:737px;width:1px;height:36px;background:#f4f4f4"></div>
<div class="abs" style="left:285px;top:773px;width:1179px;height:37.5px;background:#fff;border:1px solid #f4f4f4;border-top:0"></div>
<span class="t" style="left:303.6px;top:746px;font-weight:bold;color:#1f2a30;letter-spacing:-0.83px;">#</span>
<span class="t" style="left:373.2px;top:746px;font-weight:bold;color:#1f2a30;letter-spacing:-0.13px;">Date</span>
<span class="t" style="left:565.3px;top:746px;font-weight:bold;color:#1f2a30;letter-spacing:0.05px;">Payment Type</span>
<span class="t" style="left:891.4px;top:746px;font-weight:bold;color:#1f2a30;">Payment Note</span>
<span class="t" style="left:1174.5px;top:746px;font-weight:bold;color:#1f2a30;letter-spacing:0.15px;">Payment</span>
<span class="t" style="left:1365.9px;top:746px;font-weight:bold;color:#1f2a30;letter-spacing:-0.17px;">Action</span>
<span class="t" style="left:813.1px;top:783px;font-weight:bold;color:#1f2a30;letter-spacing:-0.10px;">Payments Pending!!</span>
<span class="t" style="left:285.5px;top:863px;font-size:17px;color:#2f7396;letter-spacing:-0.29px;">Payment :</span>
<span class="t" style="left:285px;top:892px;font-weight:bold;color:#1f2a30;letter-spacing:-0.22px;">Advance : 0.000</span>
<div class="abs" style="left:305px;top:928px;width:22px;height:22px;background:#fff;border:1px solid #c9ccd2"></div>
<span class="t" style="left:329.8px;top:929px;color:#333;letter-spacing:-0.06px;">Adjust Advance Payment</span>
<div class="abs" style="left:285px;top:950px;width:1179px;height:175px;background:#d2d6de;border-radius:3px;box-shadow:0 1px 1px rgba(0,0,0,.1)"></div>
<span class="t" style="left:294.8px;top:961px;font-weight:bold;color:#1f2a30;letter-spacing:-0.04px;">Amount</span>
<div class="inp" style="left:295px;top:985px;width:366px;height:34px;border-color:#e6e8ec"></div>
<span class="t" style="left:691.7px;top:961px;font-weight:bold;color:#1f2a30;letter-spacing:0.05px;">Payment Type</span>
<div class="inp" style="left:691px;top:985px;width:366px;height:34px;border-color:#e6e8ec"></div>
<span class="t" style="left:704.4px;top:993px;color:#444;letter-spacing:-0.09px;">-Select-</span>
<svg class="abs" style="left:1041px;top:1000.5px;" width="7" height="4.5" viewBox="0 0 7 4.500"><path d="M0 0h7l-3.500 4.500z" fill="#666"/></svg>
<span class="t" style="left:1087.4px;top:961px;font-weight:bold;color:#1f2a30;letter-spacing:-0.47px;">Account</span>
<div class="inp" style="left:1087px;top:985px;width:367px;height:34px;border-color:#e6e8ec"></div>
<span class="t" style="left:1100.4px;top:993px;color:#444;letter-spacing:0.05px;">-None-</span>
<svg class="abs" style="left:1437.4px;top:1000.5px;" width="7" height="4.5" viewBox="0 0 7 4.500"><path d="M0 0h7l-3.500 4.500z" fill="#666"/></svg>
<span class="t" style="left:294.8px;top:1020px;font-weight:bold;color:#1f2a30;">Payment Note</span>
<div class="inp" style="left:295px;top:1044px;width:1159px;height:70.5px;border-color:#e6e8ec"></div>
<svg class="abs" style="left:1442.4px;top:1104.2px;" width="9" height="9" viewBox="0 0 9 9"><g fill="#b4b4b4"><rect x="0" y="7" width="2" height="2"/><rect x="3.200" y="7" width="2" height="2"/><rect x="3.200" y="4.800" width="2" height="1.400"/><rect x="3.200" y="3.400" width="2" height=".8"/><rect x="6.400" y="7" width="2.200" height="2"/><rect x="6.400" y="4.800" width="2.200" height="1.400"/><rect x="6.400" y="2.600" width="2.200" height="1.400"/><rect x="6.400" y=".4" width="2.200" height="1.400"/></g></svg>
<div class="abs" style="left:285px;top:1179px;width:22px;height:22px;background:#fff;border:1px solid #d5d8dc"></div>
<span class="t" style="left:330.1px;top:1180px;color:#333;letter-spacing:-0.26px;">Send SMS to Customer</span>
<svg class="abs" style="left:464.6px;top:1183px;" width="12.4" height="12.4" viewBox="0 0 14 14"><circle cx="7" cy="7" r="7" fill="#dc3545"/><g fill="#fff"><rect x="5.800" y="2.200" width="2.600" height="2.300" rx=".4"/><path d="M5 6h3.400v4.300h1v1.600h-4.600v-1.600h1v-2.700h-.8z"/></g></svg>
<div class="abs" style="left:245px;top:1211px;width:1259px;height:1px;border-top:1px dashed #e4e4e4"></div>
<div class="abs" style="left:579.5px;top:1222px;width:280.5px;height:34px;background:#00a65a;border:1px solid #02a259;border-radius:3px"></div>
<span class="t" style="left:705.5px;top:1230px;color:#fff;letter-spacing:-0.55px;">Save</span>
<div class="abs" style="left:889.5px;top:1222px;width:280px;height:34px;background:#f39c12;border:1px solid #f0990f;border-radius:3px"></div>
<span class="t" style="left:1013.5px;top:1230px;color:#fff;letter-spacing:-0.44px;">Close</span>
<div class="abs" style="left:230px;top:1270px;width:1289px;height:52px;background:#fff;border-top:1px solid #d2d6de;border-bottom:1px solid #777"></div>
<span class="t" style="left:245.6px;top:1287px;font-weight:bold;color:#444;letter-spacing:-0.07px;">Copyright © 2021 All rights reserved.</span>
<span class="t" style="left:1396.8px;top:1287px;font-weight:bold;color:#444;letter-spacing:-0.11px;">Billing Book -v1.0</span>
</body>
</html>
